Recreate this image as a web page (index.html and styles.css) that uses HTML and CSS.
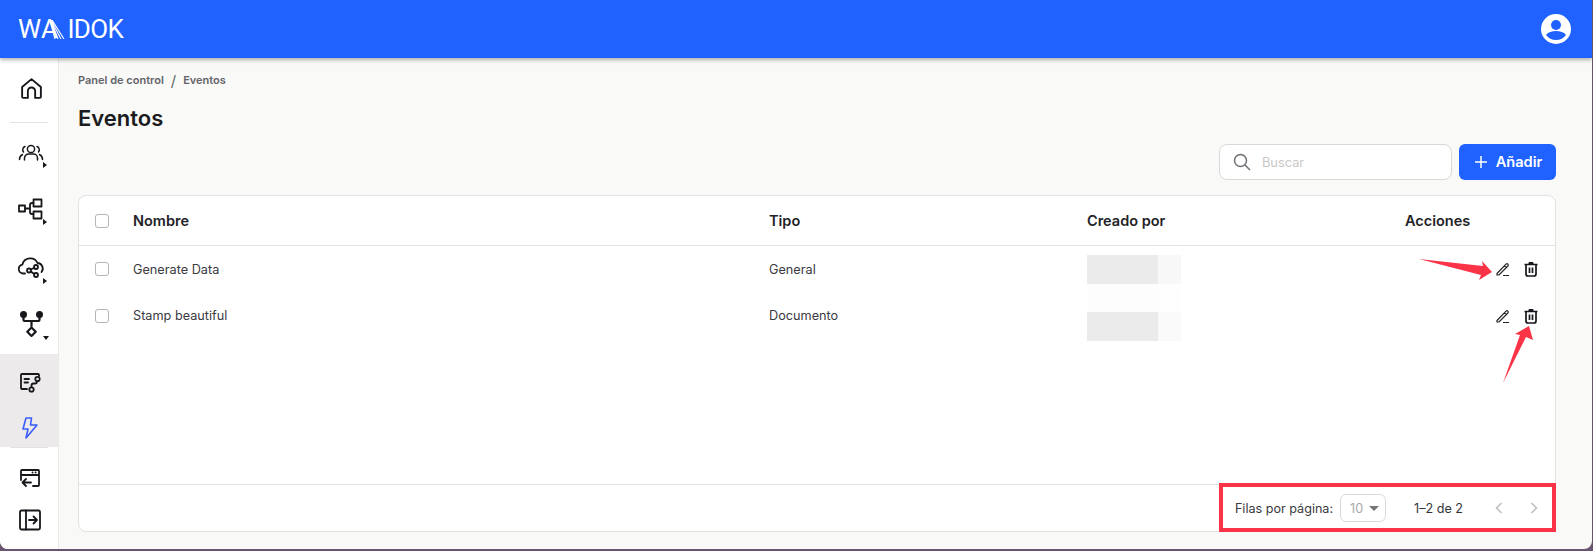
FILE: index.html
```html
<!DOCTYPE html>
<html lang="es">
<head>
<meta charset="utf-8">
<title>Eventos</title>
<link rel="stylesheet" href="styles.css">
</head>
<body>
<div class="window">
  <header class="topbar">
    <div class="logo"><span class="logo-wa">WA<svg class="logo-stripes" viewBox="0 0 16 19" width="16" height="19"><path d="M1 0L6 19M1.500 0L9 19M2 0L12 19M3 0L15 19" stroke="#fff" stroke-width="1.100"/></svg></span><span class="logo-idok">IDOK</span></div>
    <svg class="avatar" viewBox="0 0 30 30" width="30" height="30"><circle cx="15" cy="15" r="15" fill="#fff"/><circle cx="15" cy="11" r="5" fill="#1f62ff"/><path d="M5 21c2-3 6-4 10-4s8 1 10 4c-2 3-6 5-10 5s-8-2-10-5z" fill="#1f62ff"/></svg>
  </header>
  <div class="body">
    <nav class="sidebar">
      <a class="nav-item home"><svg viewBox="0 0 24 24" width="25" height="25"><path d="M4 21h4.500v-6.500a3.500 3.500 0 0 1 7 0V21H20a1 1 0 0 0 1-1V10.500L12 3 3 10.500V20a1 1 0 0 0 1 1z" class="ic"/></svg></a>
      <div class="nav-rule"></div>
      <a class="nav-item"><svg viewBox="0 0 26 24" width="26" height="24"><circle cx="13" cy="8" r="3.600" class="ic1"/><path d="M6.500 19v-2a4 4 0 0 1 4-4h5a4 4 0 0 1 4 4v2M7 5.500a3.500 3.500 0 0 0-1.500 5.500M19 5.500a3.500 3.500 0 0 1 1.500 5.500M1.500 18.500c0-2.500 1-4 3-5M24.500 18.500c0-2.500-1-4-3-5" class="ic1"/></svg><i class="caret"></i></a>
      <a class="nav-item"><svg viewBox="0 0 26 24" width="26" height="24"><rect x="1" y="7.500" width="6" height="6" class="ic"/><rect x="15.500" y="1.500" width="8" height="7" class="ic"/><rect x="15.500" y="13.500" width="8" height="7" class="ic"/><path d="M7 10.500h5M15.500 5h-1.500a2 2 0 0 0-2 2v7a2 2 0 0 0 2 2h1.500" class="ic"/></svg><i class="caret"></i></a>
      <a class="nav-item"><svg viewBox="0 0 28 24" width="28" height="24"><path d="M8 18.500H6a4.500 4.500 0 0 1-.6-8.900A8 8 0 0 1 20.500 8a5.500 5.500 0 0 1 4 9" class="ic"/><circle cx="12" cy="15.500" r="2" class="ic"/><circle cx="19" cy="12" r="2" class="ic"/><circle cx="19" cy="20" r="2" class="ic"/><path d="M13.800 14.500l3.500-1.700M13.800 16.500l3.500 2.500" class="ic"/></svg><i class="caret low"></i></a>
      <a class="nav-item"><svg viewBox="0 0 26 28" width="26" height="28"><circle cx="5.500" cy="4.500" r="3.500" fill="#17171c"/><circle cx="21.500" cy="4.500" r="3.500" fill="#17171c"/><path d="M5.500 6v4a1 1 0 0 0 1 1h14a1 1 0 0 0 1-1V6M13.500 11v5" class="ic bold"/><rect x="10.500" y="18.700" width="6" height="6" transform="rotate(45 13.500 21.700)" class="ic bold"/></svg><i class="caret down"></i></a>
      <div class="nav-group">
        <a class="nav-item sub"><svg viewBox="0 0 24 24" width="24" height="24"><path d="M9 19H4a1 1 0 0 1-1-1V5a1 1 0 0 1 1-1h16a1 1 0 0 1 1 1v1M6.500 9H11M6.500 12.500H10M13.500 17v-1.500a2 2 0 0 1 2-2H17a2 2 0 0 0 2-2" class="ic"/><circle cx="19.500" cy="9" r="2.200" class="ic"/><circle cx="13.500" cy="19.500" r="2.200" class="ic"/></svg></a>
        <a class="nav-item sub active"><svg viewBox="0 0 24 24" width="24" height="24"><path d="M13.500 2H8L5 13h5l-2 9 11-13h-6.500z" fill="none" stroke="#3a5cff" stroke-width="1.600" stroke-linejoin="round"/></svg></a>
      </div>
      <div class="nav-rule tail"></div>
      <a class="nav-item sub2"><svg viewBox="0 0 24 24" width="24" height="24"><path d="M3 14V5a1 1 0 0 1 1-1h16a1 1 0 0 1 1 1v14a1 1 0 0 1-1 1h-5M3 9h18M14.500 6.500h.1M17.500 6.500h.1M13 16.500H4.500M8 13l-3.500 3.500L8 20" class="ic"/></svg></a>
      <a class="nav-item sub2"><svg viewBox="0 0 24 24" width="24" height="24"><rect x="2" y="2.500" width="20" height="19" rx="1.500" class="ic"/><path d="M8 2.500v19M11 12h8M15.500 8.500L19 12l-3.500 3.500" class="ic"/></svg></a>
    </nav>
    <main class="content">
      <div class="crumbs"><span>Panel de control</span><em>/</em><span>Eventos</span></div>
      <h1>Eventos</h1>
      <div class="toolbar">
        <label class="search"><svg viewBox="0 0 20 20" width="20" height="20"><circle cx="8.500" cy="8.500" r="6" fill="none" stroke="#6f6f75" stroke-width="1.500"/><path d="M13 13l5 5" stroke="#6f6f75" stroke-width="1.500"/></svg><span>Buscar</span></label>
        <button class="add"><svg viewBox="0 0 14 14" width="14" height="14"><path d="M7 1v12M1 7h12" stroke="#fff" stroke-width="1.500"/></svg>Añadir</button>
      </div>
      <section class="panel">
        <div class="row head">
          <div><i class="check"></i></div><div>Nombre</div><div>Tipo</div><div>Creado por</div><div>Acciones</div>
        </div>
        <div class="row">
          <div><i class="check"></i></div><div>Generate Data</div><div>General</div><div></div>
          <div class="actions">
            <svg viewBox="0 0 16 16" width="16" height="16"><path d="M2 12.500L11 3.200a1.300 1.300 0 0 1 1.900 1.800L4 14H2zM9.500 4.800l1.800 1.800M8 14.500h6" class="act"/></svg>
            <svg viewBox="0 0 16 16" width="16" height="16"><path d="M5.500 3V2a1 1 0 0 1 1-1h3a1 1 0 0 1 1 1v1z" fill="#17171c"/><path d="M1.500 3.500h13M3 3.500V13a2 2 0 0 0 2 2h6a2 2 0 0 0 2-2V3.500M6.500 6.500v5.500M9.500 6.500v5.500" class="act bold"/></svg>
          </div>
        </div>
        <div class="row">
          <div><i class="check"></i></div><div>Stamp beautiful</div><div>Documento</div><div></div>
          <div class="actions">
            <svg viewBox="0 0 16 16" width="16" height="16"><path d="M2 12.500L11 3.200a1.300 1.300 0 0 1 1.900 1.800L4 14H2zM9.500 4.800l1.800 1.800M8 14.500h6" class="act"/></svg>
            <svg viewBox="0 0 16 16" width="16" height="16"><path d="M5.500 3V2a1 1 0 0 1 1-1h3a1 1 0 0 1 1 1v1z" fill="#17171c"/><path d="M1.500 3.500h13M3 3.500V13a2 2 0 0 0 2 2h6a2 2 0 0 0 2-2V3.500M6.500 6.500v5.500M9.500 6.500v5.500" class="act bold"/></svg>
          </div>
        </div>
        <div class="spacer"></div>
        <footer class="pager">
          <span class="rows-label">Filas por página:</span>
          <span class="select"><span>10</span><i></i></span>
          <span class="range">1–2 de 2</span>
          <svg class="chev" viewBox="0 0 10 14" width="10" height="14"><path d="M7.500 2L2.500 7l5 5" fill="none" stroke="#bdbdbd" stroke-width="1.500"/></svg>
          <svg class="chev" viewBox="0 0 10 14" width="10" height="14"><path d="M2.500 2l5 5-5 5" fill="none" stroke="#bdbdbd" stroke-width="1.500"/></svg>
        </footer>
      </section>
    </main>
  </div>
  <div class="blur">
    <b class="b1"></b><b class="b2"></b><b class="b3"></b><b class="b4"></b><b class="b5"></b><b class="b6"></b>
  </div>
  <svg class="annot" viewBox="0 0 1593 551" width="1593" height="551">
    <path d="M1419 259L1483 266 1482 261 1492 272 1479 280 1481 275z" fill="#fb3347"/>
    <path d="M1503 383L1520 335 1515 334 1529 326 1533 340 1526 337z" fill="#fb3347"/>
    <rect x="1221" y="485" width="333" height="45" fill="none" stroke="#fb3347" stroke-width="4"/>
  </svg>
</div>
</body>
</html>
```
FILE: styles.css
```css
* { box-sizing: border-box; }
html, body { margin: 0; height: 100%; }
body { background: #6a5570; font-family: Inter, "Liberation Sans", sans-serif; overflow: hidden; }
.window { position: relative; width: 1592px; height: 549px; background: #f9f9f7; border-radius: 0 0 8px 8px; overflow: hidden; display: flex; flex-direction: column; }
.topbar { height: 58px; flex: none; background: #1f62ff; display: flex; align-items: center; justify-content: space-between; padding: 0 21px 0 18px; box-shadow: 0 2px 4px rgba(0,0,0,.3); position: relative; z-index: 2; }
.logo { font: 400 26px Roboto, sans-serif; color: #fff; display: flex; align-items: center; height: 20px; }
.logo-wa { display: flex; align-items: center; letter-spacing: .5px; }
.logo-stripes { margin-left: -9px; margin-right: 2px; }
.logo-idok { letter-spacing: -.7px; }
.avatar { display: block; }
.body { flex: 1; display: flex; min-height: 0; }
.sidebar { width: 59px; flex: none; background: #fff; border-right: 1px solid #e8e8e6; display: flex; flex-direction: column; align-items: stretch; padding-top: 8px; }
.nav-item { position: relative; display: flex; align-items: center; justify-content: center; height: 57px; padding-left: 4px; flex: none; }
.nav-item.home { height: 44px; }
.nav-rule { height: 1px; background: #e2e2e0; margin: 12px 10px 1px; flex: none; }
.nav-rule.tail { margin: 0 10px; }
.nav-group { background: #eceaea; margin-top: 2px; flex: none; height: 93px; padding-top: 9px; display: flex; flex-direction: column; gap: 8px; }
.nav-item.sub { height: 38px; padding-left: 2px; }
.nav-item.sub2 { height: 42px; padding-left: 2px; }
.nav-rule.tail + .sub2 { margin-top: 9px; }
.ic { fill: none; stroke: #17171c; stroke-width: 1.800; stroke-linejoin: round; stroke-linecap: round; }
.ic.bold { stroke-width: 2.200; }
.ic1 { fill: none; stroke: #17171c; stroke-width: 1.500; stroke-linejoin: round; stroke-linecap: round; }
.caret { position: absolute; left: 43px; top: 38px; width: 0; height: 0; border-left: 4px solid #17171c; border-top: 3px solid transparent; border-bottom: 3px solid transparent; }
.caret.low { top: 40px; }
.caret.down { border-left: 3px solid transparent; border-right: 3px solid transparent; border-top: 4px solid #17171c; border-bottom: 0; top: 41px; }
.content { flex: 1; min-width: 0; padding: 15px 36px 17px 19px; display: flex; flex-direction: column; }
.crumbs { font-size: 11px; font-weight: 600; color: #64646a; display: flex; align-items: center; height: 14px; }
.crumbs em { font-style: normal; font-weight: 400; font-size: 15px; margin: 0 7px; }
h1 { font-size: 22px; font-weight: 600; color: #1c1c20; margin: 16px 0 0; line-height: 30px; }
.toolbar { display: flex; justify-content: flex-end; gap: 7px; margin-top: 11px; }
.search { width: 233px; height: 36px; background: #fff; border: 1px solid #d9d9d7; border-radius: 8px; display: flex; align-items: center; gap: 10px; padding-left: 12px; font-size: 12.800px; color: #c8c8c8; }
.add { width: 97px; height: 36px; background: #1f62ff; border: 0; border-radius: 6px; color: #fff; font: 600 14.600px Inter, sans-serif; display: flex; align-items: center; justify-content: center; gap: 8px; padding: 0 0 0 1px; }
.panel { flex: 1; margin-top: 15px; background: #fff; border: 1px solid #e2e2e0; border-radius: 8px; display: flex; flex-direction: column; min-height: 0; }
.row { display: grid; grid-template-columns: 38px 636px 318px 318px 1fr; align-items: center; height: 46.500px; padding-left: 16px; font-size: 12.700px; color: #3a3a3f; flex: none; }
.row.head { height: 50px; font-size: 14.500px; font-weight: 600; color: #232327; border-bottom: 1px solid #e2e2e0; }
.check { display: block; width: 14px; height: 14px; border: 1px solid #b5b5b5; border-radius: 3px; background: #fff; }
.actions { display: flex; gap: 12px; justify-content: flex-end; padding-right: 16px; }
.act { fill: none; stroke: #232327; stroke-width: 1.200; }
.act.bold { stroke-width: 1.700; stroke: #17171c; }
.spacer { flex: 1; }
.pager { height: 47px; flex: none; border-top: 1px solid #e2e2e0; display: flex; align-items: center; justify-content: flex-end; padding-right: 16px; font-size: 12.600px; color: #3a3a3f; }
.select { width: 46px; height: 28px; border: 1px solid #d9d9d7; border-radius: 6px; margin-left: 7px; display: flex; align-items: center; gap: 6px; padding-left: 9px; color: #a8a8a8; }
.select i { width: 0; height: 0; border-left: 5px solid transparent; border-right: 5px solid transparent; border-top: 5px solid #777; }
.range { margin: 0 31px 0 28px; color: #333338; }
.chev + .chev { margin-left: 25px; }
.blur { position: absolute; left: 1087px; top: 255px; width: 94px; height: 86px; display: grid; grid-template-columns: 71px 23px; grid-template-rows: 29px 28px 29px; }
.b1, .b5 { background: #ebebeb; }
.b2 { background: #f8f8f8; }
.b3 { background: #fdfdfd; }
.b4 { background: #fefefe; }
.b6 { background: #fafafa; }
.annot { position: absolute; left: 0; top: 0; pointer-events: none; }
```
